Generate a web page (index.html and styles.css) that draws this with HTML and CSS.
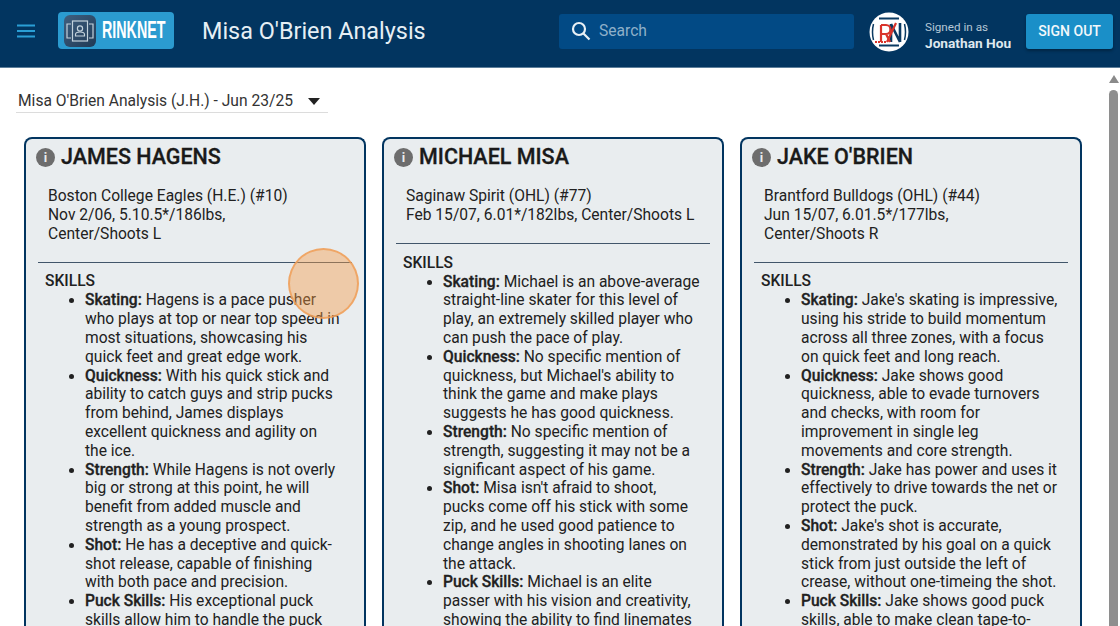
FILE: index.html
```html
<!DOCTYPE html>
<html lang="en">
<head>
  <meta charset="UTF-8" />
  <title>Misa O'Brien Analysis</title>
  <link rel="stylesheet" href="styles.css">
</head>
<body>

  <header class="topbar">
    <button class="menu-btn" aria-label="Menu">
      <svg width="20" height="14" viewBox="0 0 20 14"><path d="M1 1.5h18M1 7h18M1 12.5h18" stroke="#2a9fd6" stroke-width="2"/></svg>
    </button>
    <a class="logo" href="#">
      <span class="logo-icon">
        <svg width="32" height="26" viewBox="0 0 32 26" fill="none" stroke="#c3d2dc" stroke-width="1.2">
          <path d="M7 6H3v14h4M25 6h4v14h-4"/>
          <rect x="8.5" y="3" width="15" height="20"/>
          <circle cx="16" cy="10.5" r="2.6"/>
          <path d="M11.5 18v-1.500c0-1.500 1.500-2.500 4.500-2.500s4.500 1 4.500 2.500V18z"/>
        </svg>
      </span>
      <span class="logo-text">RINKNET</span>
    </a>
    <h1 class="page-title">Misa O'Brien Analysis</h1>
    <div class="search">
      <svg width="22" height="22" viewBox="0 0 22 22" fill="none" stroke="#e8f0f5" stroke-width="2.200"><circle cx="9" cy="9" r="6"/><path d="M13.500 13.500l6 6"/></svg>
      <span>Search</span>
    </div>
    <div class="avatar">
      <svg width="40" height="40" viewBox="0 0 40 40">
        <circle cx="20" cy="20" r="19.500" fill="#fff"/>
        <path d="M10 6.500h20M10 33.500h20" stroke="#0b3a62" stroke-width="2.200" fill="none"/>
        <path d="M4.500 12q-2 8 0 16M35.500 12q2 8 0 16" stroke="#0b3a62" stroke-width="1.500" fill="none"/>
        <path d="M22 12v18M31 11v19M22 12l9 18" stroke="#0b3a62" stroke-width="2.600" fill="none"/>
        <path d="M6 30h11" stroke="#d9342b" stroke-width="1.800" stroke-dasharray="2 1" fill="none"/>
        <path d="M12 13v17M12 13h5a4 4 0 0 1 0 9h-5M17 22l4 8M27 11L18 30" stroke="#d9342b" stroke-width="2.200" fill="none"/>
      </svg>
    </div>
    <div class="signed-in">
      <span class="signed-label">Signed in as</span>
      <span class="signed-name">Jonathan Hou</span>
    </div>
    <button class="signout">SIGN OUT</button>
  </header>

  <div class="page">
    <main class="content">
      <div class="report-select">
        <span>Misa O'Brien Analysis (J.H.) - Jun 23/25</span>
        <span class="caret"></span>
      </div>

      <div class="cards">
        <section class="card">
          <h2><span class="info">i</span>JAMES HAGENS</h2>
          <p class="bio">Boston College Eagles (H.E.) (#10)<br>Nov 2/06, 5.10.5*/186lbs,<br>Center/Shoots L</p>
          <hr>
          <h3>SKILLS</h3>
          <ul>
            <li><b>Skating:</b> Hagens is a pace pusher who plays at top or near top speed in most situations, showcasing his quick feet and great edge work.</li>
            <li><b>Quickness:</b> With his quick stick and ability to catch guys and strip pucks from behind, James displays excellent quickness and agility on the ice.</li>
            <li><b>Strength:</b> While Hagens is not overly big or strong at this point, he will benefit from added muscle and strength as a young prospect.</li>
            <li><b>Shot:</b> He has a deceptive and quick-shot release, capable of finishing with both pace and precision.</li>
            <li><b>Puck Skills:</b> His exceptional puck skills allow him to handle the puck</li>
          </ul>
        </section>

        <section class="card">
          <h2><span class="info">i</span>MICHAEL MISA</h2>
          <p class="bio">Saginaw Spirit (OHL) (#77)<br>Feb 15/07, 6.01*/182lbs, Center/Shoots L</p>
          <hr>
          <h3>SKILLS</h3>
          <ul>
            <li><b>Skating:</b> Michael is an above-average straight-line skater for this level of play, an extremely skilled player who can push the pace of play.</li>
            <li><b>Quickness:</b> No specific mention of quickness, but Michael's ability to think the game and make plays suggests he has good quickness.</li>
            <li><b>Strength:</b> No specific mention of strength, suggesting it may not be a significant aspect of his game.</li>
            <li><b>Shot:</b> Misa isn't afraid to shoot, pucks come off his stick with some zip, and he used good patience to change angles in shooting lanes on the attack.</li>
            <li><b>Puck Skills:</b> Michael is an elite passer with his vision and creativity, showing the ability to find linemates</li>
          </ul>
        </section>

        <section class="card">
          <h2><span class="info">i</span>JAKE O'BRIEN</h2>
          <p class="bio">Brantford Bulldogs (OHL) (#44)<br>Jun 15/07, 6.01.5*/177lbs,<br>Center/Shoots R</p>
          <hr>
          <h3>SKILLS</h3>
          <ul>
            <li><b>Skating:</b> Jake's skating is impressive, using his stride to build momentum across all three zones, with a focus on quick feet and long reach.</li>
            <li><b>Quickness:</b> Jake shows good quickness, able to evade turnovers and checks, with room for improvement in single leg movements and core strength.</li>
            <li><b>Strength:</b> Jake has power and uses it effectively to drive towards the net or protect the puck.</li>
            <li><b>Shot:</b> Jake's shot is accurate, demonstrated by his goal on a quick stick from just outside the left of crease, without one-timeing the shot.</li>
            <li><b>Puck Skills:</b> Jake shows good puck skills, able to make clean tape-to-tape passes</li>
          </ul>
        </section>
      </div>
    </main>

    <div class="scrollbar">
      <span class="scroll-up"></span>
      <span class="scroll-thumb"></span>
    </div>
  </div>

  <div class="click-marker"></div>

</body>
</html>
```

FILE: styles.css
```css
* {
  box-sizing: border-box;
  margin: 0;
  padding: 0;
}

html, body {
  height: 100%;
  overflow: hidden;
}

body {
  font-family: Roboto, sans-serif;
  font-size: 15.6px;
  line-height: 18.8px;
  color: #212121;
  background: #fff;
  display: flex;
  flex-direction: column;
}

/* Top bar */
.topbar {
  flex: none;
  height: 68px;
  background: #023560;
  border-bottom: 1px solid #5d7f9b;
  display: flex;
  align-items: center;
  padding: 0 7px 5px 16px;
}

.menu-btn {
  background: none;
  border: none;
  display: flex;
  margin-right: 22px;
}

.logo {
  width: 116px;
  height: 37px;
  margin-top: -1px;
  background: #2b9bd0;
  border-radius: 4px;
  display: flex;
  align-items: center;
  padding-left: 6px;
  text-decoration: none;
}

.logo-icon {
  width: 32px;
  height: 32px;
  border-radius: 6px;
  background: linear-gradient(135deg, #3f5f7f, #1f3a56);
  display: flex;
  align-items: center;
  justify-content: center;
}

.logo-text {
  margin-left: 6px;
  color: #fff;
  font-family: "Liberation Sans", sans-serif;
  font-weight: 700;
  font-size: 24px;
  display: inline-block;
  transform: scaleX(0.595);
  transform-origin: left center;
  white-space: nowrap;
}

.page-title {
  margin-left: 28px;
  font-size: 23.4px;
  line-height: 28px;
  font-weight: 400;
  color: #e6eff5;
  width: 357px;
  white-space: nowrap;
}

.search {
  width: 295px;
  height: 35px;
  background: #024a85;
  border-radius: 3px;
  display: flex;
  align-items: center;
  gap: 7px;
  padding-left: 11px;
  color: #8fb0c9;
}

.avatar {
  margin-left: 15px;
  display: flex;
  margin-top: 1px;
}

.signed-in {
  margin: 7px 0 0 16px;
  width: 101px;
  display: flex;
  flex-direction: column;
  line-height: 16px;
}

.signed-label {
  font-size: 11.7px;
  color: #b5c7d5;
}

.signed-name {
  font-size: 13.7px;
  font-weight: 700;
  color: #dfe8ee;
}

.signout {
  width: 87px;
  height: 35px;
  background: #1a8fc8;
  border: none;
  border-radius: 3px;
  color: #f2f8fb;
  font-family: Roboto, sans-serif;
  font-size: 14px;
  font-weight: 500;
  box-shadow: 0 2px 3px rgba(0,0,0,0.3);
}

/* Page body */
.page {
  flex: 1;
  min-height: 0;
  display: flex;
}

.content {
  flex: 1;
  min-width: 0;
  padding: 21px 0 0 16px;
  overflow: hidden;
}

.report-select {
  width: 312px;
  height: 24px;
  border-bottom: 1px solid #dcdcdc;
  display: flex;
  align-items: center;
  justify-content: space-between;
  padding: 2px 8px 0 2px;
  color: #333;
}

.caret {
  border-left: 6px solid transparent;
  border-right: 6px solid transparent;
  border-top: 7px solid #222;
}

.cards {
  display: flex;
  gap: 16px;
  margin: 24px 0 0 8px;
}

.card {
  flex: none;
  width: 342px;
  background: #e9edef;
  border: 2px solid #023560;
  border-bottom: none;
  border-radius: 8px 8px 0 0;
  padding: 5px 12px 0 10px;
  height: 600px;
}

.card h2 {
  display: flex;
  align-items: center;
  gap: 6px;
  font-size: 21.5px;
  font-weight: 500;
  color: #1a1a1a;
  line-height: 26px;
  -webkit-text-stroke: 0.3px currentColor;
}

.info {
  width: 19px;
  height: 19px;
  border-radius: 50%;
  background: #6d6d6d;
  color: #e9edef;
  font-size: 13px;
  font-weight: 700;
  line-height: 19px;
  text-align: center;
  flex: none;
  -webkit-text-stroke: 0;
}

.bio {
  margin: 17px 0 0 12px;
}

.card hr {
  border: none;
  border-top: 1px solid #42566a;
  margin: 18.5px 0 0 2px;
}

.card h3 {
  font-size: 15.6px;
  font-weight: 500;
  margin: 9.5px 0 0 9px;
  line-height: 19px;
}

.card ul {
  padding-left: 49px;
  padding-right: 9.5px;
}

.card b {
  font-weight: 500;
  -webkit-text-stroke: 0.3px currentColor;
}

/* Scrollbar */
.scrollbar {
  flex: none;
  width: 13px;
  display: flex;
  flex-direction: column;
  align-items: center;
  padding: 7px 0 0;
}

.scroll-up {
  border-left: 5.5px solid transparent;
  border-right: 5.5px solid transparent;
  border-bottom: 8px solid #8a8a8a;
}

.scroll-thumb {
  width: 9px;
  flex: 1;
  margin-top: 7px;
  background: #8e8e8e;
  border-radius: 5px 5px 0 0;
}

/* Click marker from the screen recording */
.click-marker {
  position: absolute;
  left: 288px;
  top: 248px;
  width: 71px;
  height: 71px;
  border-radius: 50%;
  background: rgba(245, 155, 70, 0.42);
  border: 2px solid rgba(240, 160, 90, 0.85);
}
```
